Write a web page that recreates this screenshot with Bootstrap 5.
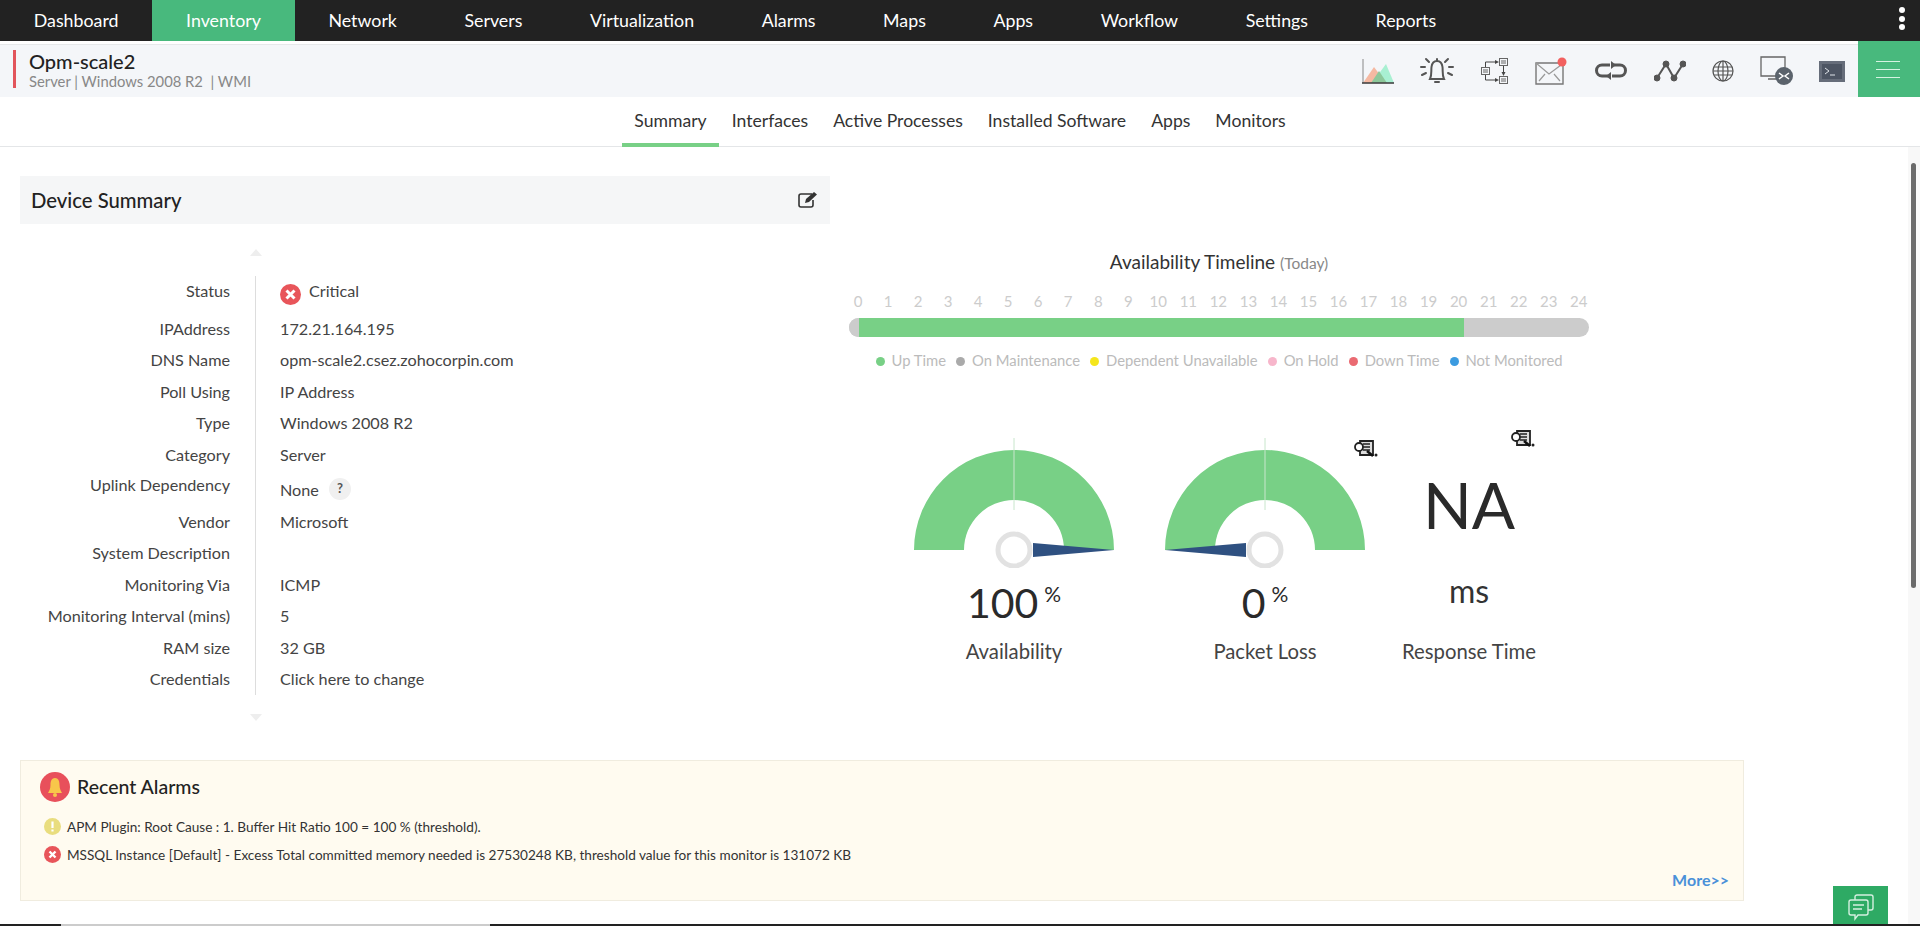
<!DOCTYPE html>
<html lang="en">
<head>
  <meta charset="UTF-8">
  <title>Opm-scale2 • Inventory</title>
  <meta name="viewport" content="width=device-width,initial-scale=1">
  <link href="https://cdn.jsdelivr.net/npm/bootstrap@5.3.0/dist/css/bootstrap.min.css" rel="stylesheet">
  <style>
    html, body { height: 100%; overflow: hidden; }
    body { font-family: "Lato", "Liberation Sans", sans-serif; color: #333; font-size: 16.2px; background: #fff; }
    .shell { height: 926px; position: relative; }

    .topbar { height: 41px; background: #222; }
    .topbar a { color: #fff; text-decoration: none; font-size: 17.8px; padding: 0 33.8px; line-height: 41px; display: block; }
    .topbar a.on { background: #48b97d; }
    .topbar-dots { position: absolute; top: 7px; right: 15px; }
    .topbar-dots i { display: block; width: 6px; height: 6px; margin-bottom: 2.5px; border-radius: 50%; background: #fff; }

    .devhead { height: 53px; margin-top: 3px; background: #f4f6f9; border-top: 1px solid #e6e8ea; }
    .devhead-name { margin: 5px 0 0 13px; padding-left: 13px; height: 38px; border-left: 3px solid #e2555c; }
    .devhead-name h1 { font-size: 20px; font-weight: 500; line-height: 22px; margin: 0; color: #222; }
    .devhead-name p { font-size: 14.8px; line-height: 19px; margin: 0; color: #888; }
    .devhead-tools { gap: 26px; }
    .devhead-menu { width: 62px; margin-left: 13px; margin-top: -4px; height: 56px; background: #48b97d; padding: 20px 20px 0 18px; }
    .devhead-menu i { display: block; height: 1px; background: #d6f3e2; margin-bottom: 7px; }

    .subtabs { height: 50px; border-bottom: 1px solid #e4e6e8; }
    .subtabs .nav-link { color: #333; font-size: 17.6px; padding: 0 12.5px; line-height: 47px; height: 50px; }
    .subtabs .nav-link.active { border-bottom: 4px solid #78d086; }

    .pagebody { height: 779px; }
    .pagemain { padding: 29px 0 0 20px; width: 1908px; flex: none; }
    .rail { width: 12px; background: #f8f8f8; position: relative; }
    .rail i { position: absolute; left: 3px; top: 16px; width: 5px; height: 425px; border-radius: 3px; background: #6b6b6b; }

    .infocol { width: 810px; flex: none; }
    .infohead { height: 48px; background: #f5f6f7; padding: 0 12px 0 11px; }
    .infohead h2 { font-size: 20.3px; font-weight: 500; margin: 0; color: #222; }
    .cap-up, .cap-down { width: 0; height: 0; margin-left: 230px; border-left: 6px solid transparent; border-right: 6px solid transparent; }
    .cap-up { margin-top: 25px; margin-bottom: 7px; border-bottom: 7px solid #eee; }
    .cap-down { margin-top: 10px; border-top: 7px solid #eee; }
    .infolist { padding: 13px 0 9px; }
    .inforow { height: 31.5px; line-height: 31.5px; color: #444; }
    .inforow.rowtall { height: 36.5px; line-height: 22px; }
    .inforow.rowtall > div { padding-top: 4px; }
    .inforow.rowlink { height: 35.5px; }
    .inforow.rowlink .infokey { line-height: 29px; }
    .inforow.rowlink .infoval { padding-top: 3px; }
    .infokey { width: 210px; text-align: right; flex: none; }
    .infoval { margin-left: 25px; padding-left: 24px; border-left: 1px solid #ddd; flex-grow: 1; }
    .tip { width: 22px; height: 22px; border-radius: 50%; background: #f0f0f0; font-size: 13px; font-weight: 700; line-height: 20px; text-align: center; margin-left: 10px; color: #555; }

    .healthcol { width: 740px; margin-left: 19px; flex: none; position: relative; }
    .healthcol h3 { font-size: 19px; font-weight: 400; margin: 72px 0 0; line-height: 27px; text-align: center; color: #333; }
    .healthcol h3 small { font-size: 15.5px; color: #888; }
    .hours { margin: 14px 0 0 -1px; color: #ccc; font-size: 15px; line-height: 20px; }
    .hours span { width: 20px; text-align: center; }
    .timeline { height: 19px; margin-top: 7px; border-radius: 10px; background: #ccc; }
    .timeline .progress-bar { background: #78d086; }
    .timeline .timeline-pad { background: #ccc; }
    .legendrow { gap: 10px; margin-top: 13px; font-size: 14.8px; line-height: 21px; color: #bbb; justify-content: center; }
    .legendrow i { display: inline-block; width: 9px; height: 9px; border-radius: 50%; margin-right: 7px; }
    .dot-up { background: #78d086; }
    .dot-maint { background: #aaa; }
    .dot-dep { background: #f5e61c; }
    .dot-hold { background: #f7b6cb; }
    .dot-down { background: #ea6a72; }
    .dot-none { background: #3c9be0; }

    .dials { margin-top: 67px; }
    .dialbox { width: 200px; text-align: center; flex: none; }
    .dialbox:first-child { margin-left: 65px; }
    .dialbox + .dialbox { margin-left: 51px; }
    .dialbox.plain { width: 160px; margin-left: 24px; }
    .dialbox svg { display: block; }
    .dialnum { font-size: 41px; font-weight: 400; line-height: 46px; margin-top: 12px; color: #2a2a2a; }
    .dialnum sup { font-size: 21px; top: -16px; margin-left: 6px; }
    .dialname { font-size: 20.3px; margin-top: 12px; line-height: 26px; color: #444; }
    .dialna { font-size: 64px; font-weight: 400; line-height: 134px; color: #2a2a2a; }
    .dialms { font-size: 32px; font-weight: 400; line-height: 46px; margin-top: -4px; height: 56px; color: #333; }
    .plain .dialname { margin-top: 14px; }
    .report-a, .report-b { position: absolute; }
    .report-a { left: 505px; top: 264px; }
    .report-b { left: 662px; top: 254px; }

    .alarmbox { width: 1724px; height: 141px; margin-top: 39px; background: #fffbf0; border: 1px solid #f0ecdf; padding: 11px 20px 0 19px; position: relative; }
    .alarmbox h4 { font-size: 19.5px; font-weight: 500; margin: 0 0 0 7px; color: #222; }
    .alarmline { font-size: 13.6px; line-height: 28px; color: #333; gap: 6px; }
    .alarmlist { margin: 11px 0 0 4px; }
    .alarmmore { position: absolute; right: 14px; bottom: 8px; color: #4a90d9; font-size: 16px; font-weight: 700; text-decoration: none; }

    .chatbtn { position: absolute; left: 1833px; top: 886px; width: 55px; height: 38px; background: #2eaa64; text-align: center; padding-top: 8px; }
    .edgebar { position: absolute; left: 0; right: 0; bottom: 0; height: 2px; background: #222; }
    .edgebar i { display: block; margin-left: 61px; width: 429px; height: 2px; background: #ccc; }
  </style>
</head>
<body>
<div class="shell">

  <nav class="topbar d-flex">
    <a href="#">Dashboard</a>
    <a href="#" class="on">Inventory</a>
    <a href="#">Network</a>
    <a href="#">Servers</a>
    <a href="#">Virtualization</a>
    <a href="#">Alarms</a>
    <a href="#">Maps</a>
    <a href="#">Apps</a>
    <a href="#">Workflow</a>
    <a href="#">Settings</a>
    <a href="#">Reports</a>
    <div class="topbar-dots"><i></i><i></i><i></i></div>
  </nav>

  <header class="devhead d-flex justify-content-between">
    <div class="devhead-name">
      <h1>Opm-scale2</h1>
      <p>Server | Windows 2008 R2 &nbsp;| WMI</p>
    </div>
    <div class="d-flex align-items-center">
      <div class="d-flex align-items-center devhead-tools">
        <!-- chart -->
        <svg width="32" height="26" viewBox="0 0 32 26"><path d="M10 25L24 6 32 25Z" fill="#a8f0d2"/><path d="M1 25L12 9 24 25Z" fill="#f5b9a2"/><path d="M9 25L17 13 25 25Z" fill="#8cc89a"/><path d="M1 1V25" stroke="#888"/><path d="M0 25H32" stroke="#444" stroke-width="1.6"/></svg>
        <!-- bell -->
        <svg width="34" height="30" viewBox="0 0 34 30" fill="none" stroke="#555" stroke-width="2" stroke-linecap="round"><path d="M10 23C12 19 11 15 11.500 11 12 7 14 5 17 5S22 7 22.500 11C23 15 22 19 24 23Z"/><path d="M15 26H19M17 3V5"/><path d="M6 3L9 6M28 3L25 6M1 11H5M33 11H29M2 19L6 17M32 19L28 17"/></svg>
        <!-- flow -->
        <svg width="29" height="28" viewBox="0 0 29 28" fill="none" stroke="#666" stroke-width="1"><rect x="19.500" y="1.500" width="8" height="7"/><rect x="1.500" y="10.500" width="8" height="7"/><rect x="19.500" y="19.500" width="8" height="7"/><path d="M21 4H26M21 6H26M3 13H8M3 15H8M21 22H26M21 24H26"/><path d="M5.500 10V5H15M5.500 18V23H15M23.500 9V17" stroke="#444"/><path d="M15 3L19 5 15 7ZM15 21L19 23 15 25ZM21.500 15L23.500 19 25.500 15Z" fill="#444" stroke="none"/></svg>
        <!-- mail -->
        <svg width="33" height="28" viewBox="0 0 33 28" fill="none"><path d="M1 6H28V27H1Z" stroke="#777" stroke-width="1.4"/><path d="M1 6L14 17 26 8M4 24L10 17M25 24L19 17" stroke="#999" stroke-width="1.2"/><circle cx="27" cy="5" r="4.500" fill="#f2605f"/></svg>
        <!-- loop -->
        <svg width="34" height="20" viewBox="0 0 34 20" fill="none" stroke="#555" stroke-width="3"><path d="M16 4H8A5.500 5.500 0 0 0 8 15H14M18 15H26A5.500 5.500 0 0 0 26 4H20"/><path d="M17 0L22 4 17 8ZM17 11L12 15 17 19Z" fill="#555" stroke="none"/></svg>
        <!-- graph -->
        <svg width="32" height="22" viewBox="0 0 32 22" fill="#555" stroke="#555"><path d="M3 18L12 4 20 18 29 4" fill="none" stroke-width="2"/><circle cx="3" cy="18" r="3"/><circle cx="12" cy="4" r="3"/><circle cx="20" cy="18" r="3"/><circle cx="29" cy="4" r="3"/></svg>
        <!-- globe -->
        <svg width="22" height="22" viewBox="0 0 22 22" fill="none" stroke="#555" stroke-width="1.2"><circle cx="11" cy="11" r="10"/><ellipse cx="11" cy="11" rx="5" ry="10"/><path d="M11 1V21M2 7H20M1 11H21M2 15H20"/></svg>
        <!-- rdp -->
        <svg width="33" height="30" viewBox="0 0 33 30"><path d="M1 1H25V20H1ZM8 23H16" fill="none" stroke="#666" stroke-width="1.3"/><circle cx="24" cy="20" r="9" fill="#5b636c"/><path d="M19 23L23 20 19 17M29 23L25 20 29 17" fill="none" stroke="#fff" stroke-width="1.5"/></svg>
        <!-- terminal -->
        <svg width="26" height="21" viewBox="0 0 26 21"><rect x="0" y="0" width="26" height="21" fill="#666d7a"/><rect x="3" y="3" width="20" height="15" fill="#4d5563"/><path d="M6 7L10 10 6 13M11 14H16" fill="none" stroke="#dfe3e8" stroke-width="1"/></svg>
      </div>
      <div class="devhead-menu"><i></i><i></i><i></i></div>
    </div>
  </header>

  <ul class="nav subtabs justify-content-center">
    <li class="nav-item"><a class="nav-link active" href="#">Summary</a></li>
    <li class="nav-item"><a class="nav-link" href="#">Interfaces</a></li>
    <li class="nav-item"><a class="nav-link" href="#">Active Processes</a></li>
    <li class="nav-item"><a class="nav-link" href="#">Installed Software</a></li>
    <li class="nav-item"><a class="nav-link" href="#">Apps</a></li>
    <li class="nav-item"><a class="nav-link" href="#">Monitors</a></li>
  </ul>

  <div class="pagebody d-flex">
    <div class="pagemain">
      <div class="d-flex">
        <section class="infocol">
          <div class="infohead d-flex align-items-center justify-content-between">
            <h2>Device Summary</h2>
            <svg width="21" height="18" viewBox="0 0 21 18" fill="none" stroke="#333" stroke-width="1.6"><path d="M15 3H4A2 2 0 0 0 2 5V14A2 2 0 0 0 4 16H14A2 2 0 0 0 16 14V9"/><path d="M8 12L9 8 17 1 20 3.500 12 11Z" fill="#333" stroke="none"/></svg>
          </div>
          <div class="cap-up"></div>
          <div class="infolist">
            <div class="d-flex inforow rowtall"><div class="infokey">Status</div><div class="infoval d-flex"><svg class="me-2 mt-1" width="21" height="21" viewBox="0 0 21 21"><circle cx="10.500" cy="10.500" r="10.500" fill="#e8555a"/><path d="M6.500 6.500L14.500 14.500M14.500 6.500L6.500 14.500" stroke="#fff" stroke-width="3"/></svg>Critical</div></div>
            <div class="d-flex inforow"><div class="infokey">IPAddress</div><div class="infoval">172.21.164.195</div></div>
            <div class="d-flex inforow"><div class="infokey">DNS Name</div><div class="infoval">opm-scale2.csez.zohocorpin.com</div></div>
            <div class="d-flex inforow"><div class="infokey">Poll Using</div><div class="infoval">IP Address</div></div>
            <div class="d-flex inforow"><div class="infokey">Type</div><div class="infoval">Windows 2008 R2</div></div>
            <div class="d-flex inforow"><div class="infokey">Category</div><div class="infoval">Server</div></div>
            <div class="d-flex inforow rowlink"><div class="infokey">Uplink Dependency</div><div class="infoval d-flex align-items-center">None <span class="tip">?</span></div></div>
            <div class="d-flex inforow"><div class="infokey">Vendor</div><div class="infoval">Microsoft</div></div>
            <div class="d-flex inforow"><div class="infokey">System Description</div><div class="infoval"></div></div>
            <div class="d-flex inforow"><div class="infokey">Monitoring Via</div><div class="infoval">ICMP</div></div>
            <div class="d-flex inforow"><div class="infokey">Monitoring Interval (mins)</div><div class="infoval">5</div></div>
            <div class="d-flex inforow"><div class="infokey">RAM size</div><div class="infoval">32 GB</div></div>
            <div class="d-flex inforow"><div class="infokey">Credentials</div><div class="infoval">Click here to change</div></div>
          </div>
          <div class="cap-down"></div>
        </section>

        <section class="healthcol">
          <h3>Availability Timeline <small>(Today)</small></h3>
          <div class="hours d-flex justify-content-between">
            <span>0</span><span>1</span><span>2</span><span>3</span><span>4</span><span>5</span><span>6</span><span>7</span><span>8</span><span>9</span><span>10</span><span>11</span><span>12</span><span>13</span><span>14</span><span>15</span><span>16</span><span>17</span><span>18</span><span>19</span><span>20</span><span>21</span><span>22</span><span>23</span><span>24</span>
          </div>
          <div class="progress timeline">
            <div class="progress-bar timeline-pad" style="width:1.35%"></div>
            <div class="progress-bar" style="width:81.8%"></div>
          </div>
          <div class="d-flex legendrow">
            <span><i class="dot-up"></i>Up Time</span>
            <span><i class="dot-maint"></i>On Maintenance</span>
            <span><i class="dot-dep"></i>Dependent Unavailable</span>
            <span><i class="dot-hold"></i>On Hold</span>
            <span><i class="dot-down"></i>Down Time</span>
            <span><i class="dot-none"></i>Not Monitored</span>
          </div>

          <div class="d-flex dials">
            <div class="dialbox">
              <svg width="200" height="130" viewBox="0 0 200 130"><path d="M0 112A100 100 0 0 1 200 112H150A50 50 0 0 0 50 112Z" fill="#78d086"/><path d="M100 0V72" stroke="#c8e6cc"/><polygon points="119,105 200,112 119,119" fill="#2f5181"/><circle cx="100" cy="112" r="16" fill="#fff" stroke="#e2e2e2" stroke-width="5"/></svg>
              <div class="dialnum">100<sup>%</sup></div>
              <div class="dialname">Availability</div>
            </div>
            <div class="dialbox">
              <svg width="200" height="130" viewBox="0 0 200 130"><path d="M0 112A100 100 0 0 1 200 112H150A50 50 0 0 0 50 112Z" fill="#78d086"/><path d="M100 0V72" stroke="#c8e6cc"/><polygon points="81,105 0,112 81,119" fill="#2f5181"/><circle cx="100" cy="112" r="16" fill="#fff" stroke="#e2e2e2" stroke-width="5"/></svg>
              <div class="dialnum">0<sup>%</sup></div>
              <div class="dialname">Packet Loss</div>
            </div>
            <div class="dialbox plain">
              <div class="dialna">NA</div>
              <div class="dialms">ms</div>
              <div class="dialname">Response Time</div>
            </div>
          </div>
          <svg class="report-a" width="24" height="18" viewBox="0 0 24 18"><path d="M6 1H19V15H6Z" fill="#ddd" stroke="#222" stroke-width="1.8"/><path d="M9 4H16M9 7H16M9 10H16" stroke="#222" stroke-width="1.300"/><circle cx="5" cy="7" r="4" fill="#fff" stroke="#222" stroke-width="1.800"/><path d="M13 11L19 16" stroke="#111" stroke-width="2.500"/><circle cx="22" cy="15" r="1.500" fill="#222"/></svg>
          <svg class="report-b" width="24" height="18" viewBox="0 0 24 18"><path d="M6 1H19V15H6Z" fill="#ddd" stroke="#222" stroke-width="1.8"/><path d="M9 4H16M9 7H16M9 10H16" stroke="#222" stroke-width="1.300"/><circle cx="5" cy="7" r="4" fill="#fff" stroke="#222" stroke-width="1.800"/><path d="M13 11L19 16" stroke="#111" stroke-width="2.500"/><circle cx="22" cy="15" r="1.500" fill="#222"/></svg>
        </section>
      </div>

      <section class="alarmbox">
        <div class="d-flex align-items-center">
          <svg width="30" height="30" viewBox="0 0 30 30"><circle cx="15" cy="15" r="15" fill="#e8505b"/><path d="M15 6C11 6 10.500 10 10.500 13 10.500 17 9 19 8 21H22C21 19 19.500 17 19.500 13 19.500 10 19 6 15 6Z" fill="#f8c64a"/><circle cx="15" cy="23" r="2" fill="#f8c64a"/></svg>
          <h4>Recent Alarms</h4>
        </div>
        <div class="alarmlist">
          <div class="d-flex align-items-center alarmline"><svg width="17" height="17" viewBox="0 0 17 17"><circle cx="8.500" cy="8.500" r="8.500" fill="#e9dd7e"/><path d="M8.500 3.500V10M8.500 11.500V13.500" stroke="#fff" stroke-width="2.200"/></svg>APM Plugin: Root Cause : 1. Buffer Hit Ratio 100 = 100 % (threshold).</div>
          <div class="d-flex align-items-center alarmline"><svg width="17" height="17" viewBox="0 0 17 17"><circle cx="8.500" cy="8.500" r="8.500" fill="#e8555a"/><path d="M5.500 5.500L11.500 11.500M11.500 5.500L5.500 11.500" stroke="#fff" stroke-width="2.400"/></svg>MSSQL Instance [Default] - Excess Total committed memory needed is 27530248 KB, threshold value for this monitor is 131072 KB</div>
        </div>
        <a class="alarmmore" href="#">More&gt;&gt;</a>
      </section>
    </div>
    <div class="rail"><i></i></div>
  </div>

  <div class="chatbtn">
    <svg width="28" height="30" viewBox="0 0 28 30" fill="none" stroke="#d5f0e0" stroke-width="1.4"><path d="M8 6V3A2 2 0 0 1 10 1H24A2 2 0 0 1 26 3V14A2 2 0 0 1 24 16H21"/><path d="M4 6H19A2 2 0 0 1 21 8V19A2 2 0 0 1 19 21H11L8 25V21H4A2 2 0 0 1 2 19V8A2 2 0 0 1 4 6Z"/><path d="M6 11H17M6 15H15"/></svg>
  </div>
  <div class="edgebar"><i></i></div>
</div>
<script src="https://cdn.jsdelivr.net/npm/bootstrap@5.3.0/dist/js/bootstrap.bundle.min.js"></script>
</body>
</html>
